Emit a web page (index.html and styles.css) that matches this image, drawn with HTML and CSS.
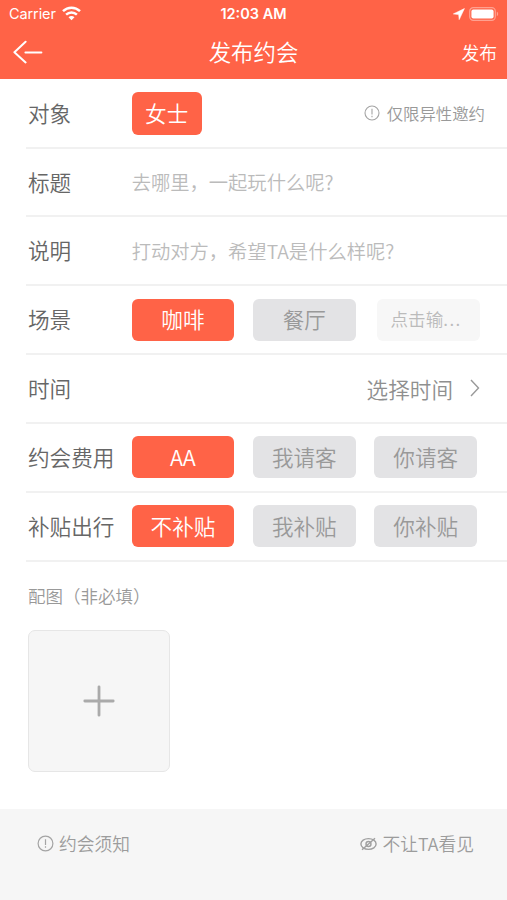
FILE: index.html
```html
<!DOCTYPE html>
<html lang="zh-CN">
<head>
<meta charset="utf-8">
<title>发布约会</title>
<link rel="stylesheet" href="styles.css">
</head>
<body>
<header class="header">
  <div class="status">
    <div class="status-left">
      <span>Carrier</span>
      <svg class="wifi" width="19" height="15" viewBox="0 0 19 15" fill="none" stroke="#fff" stroke-width="2.5">
        <path d="M1 5.2C5.8.6 13.2.6 18 5.2"/>
        <path d="M4.1 8.7c3.1-2.9 7.7-2.9 10.8 0"/>
        <path d="M9.5 14.3 6.5 11.2c1.7-1.5 4.3-1.5 6 0z" fill="#fff" stroke="none"/>
      </svg>
    </div>
    <div class="time">12:03 AM</div>
    <div class="status-right">
      <svg width="12" height="12" viewBox="0 0 12 12" fill="#fff" stroke="#fff" stroke-width=".6" stroke-linejoin="round"><path d="M11.4.6.4 5.9l5.3.5.5 5.2z"/></svg>
      <svg width="30" height="14" viewBox="0 0 30 14"><rect x=".7" y=".7" width="25.6" height="12.6" rx="3.6" fill="none" stroke="#fff" stroke-opacity=".4" stroke-width="1.2"/><rect x="2.4" y="2.4" width="22.2" height="9.2" rx="2" fill="#fff"/><path d="M27.8 4.8c1.8.6 1.8 3.8 0 4.4z" fill="#fff" fill-opacity=".4"/></svg>
    </div>
  </div>
  <nav class="nav">
    <svg class="back" width="30" height="24" viewBox="0 0 30 24" fill="none" stroke="#fff" stroke-width="2" stroke-linecap="round" stroke-linejoin="round"><path d="M12.6 1.8 1.4 12.2l11.2 10.2M12.4 12.6h16"/></svg>
    <h1 class="title">发布约会</h1>
    <span class="publish">发布</span>
  </nav>
</header>
<main class="form">
  <section class="row">
    <span class="label">对象</span>
    <span class="chip chip-small chip-on">女士</span>
    <span class="hint">
      <svg width="16" height="16" viewBox="0 0 16 16" fill="none" stroke="#a4a4a4" stroke-width="1.1"><circle cx="8" cy="8" r="7"/><path d="M8 3.8v5.7M8 10.8v1.4"/></svg>
      仅限异性邀约
    </span>
  </section>
  <section class="row">
    <span class="label">标题</span>
    <span class="placeholder">去哪里，一起玩什么呢?</span>
  </section>
  <section class="row">
    <span class="label">说明</span>
    <span class="placeholder">打动对方，希望TA是什么样呢?</span>
  </section>
  <section class="row">
    <span class="label">场景</span>
    <span class="chip chip-on">咖啡</span>
    <span class="chip">餐厅</span>
    <span class="chip chip-input">点击输<span class="dots">...</span></span>
  </section>
  <section class="row">
    <span class="label">时间</span>
    <span class="picker">选择时间
      <svg width="10" height="18" viewBox="0 0 10 18" fill="none" stroke="#999" stroke-width="1.4"><path d="M1 1l7.5 8L1 17"/></svg>
    </span>
  </section>
  <section class="row">
    <span class="label">约会费用</span>
    <span class="chip chip-on">AA</span>
    <span class="chip">我请客</span>
    <span class="chip">你请客</span>
  </section>
  <section class="row">
    <span class="label">补贴出行</span>
    <span class="chip chip-on">不补贴</span>
    <span class="chip">我补贴</span>
    <span class="chip">你补贴</span>
  </section>
  <section class="photos">
    <div class="photos-label">配图（非必填）</div>
    <div class="upload">
      <svg width="32" height="32" viewBox="0 0 32 32" fill="none" stroke="#aaa" stroke-width="2.8" stroke-linecap="round"><path d="M16 1.8v28.4M1.8 16h28.4"/></svg>
    </div>
  </section>
</main>
<footer class="footer">
  <span class="foot-item">
    <svg width="17" height="17" viewBox="0 0 17 17" fill="none" stroke="#a4a4a4" stroke-width="1.2"><circle cx="8.5" cy="8.5" r="7.4"/><path d="M8.5 4.2v5.7M8.5 11.2v1.5"/></svg>
    约会须知
  </span>
  <span class="foot-item">
    <svg width="17" height="14" viewBox="0 0 17 14" fill="none" stroke="#a0a0a0" stroke-width="1.4"><ellipse cx="8.5" cy="7" rx="7.6" ry="5.4"/><circle cx="8.5" cy="7" r="2.5"/><path d="M2 12.8 15 1.2"/></svg>
    不让TA看见
  </span>
</footer>
</body>
</html>
```
FILE: styles.css
```css
* { box-sizing: border-box; }
body {
  margin: 0;
  height: 900px;
  display: flex;
  flex-direction: column;
  background: #fff;
  color: #666;
  font-family: "Noto Sans CJK SC", sans-serif;
  font-weight: 350;
  font-size: 21.6px;
  white-space: nowrap;
  overflow: hidden;
}
svg { display: block; flex: none; }
.header { height: 79px; background: #ff6347; color: #fff; }
.status {
  height: 27px;
  padding: 0 8px 0 9px;
  display: grid;
  grid-template-columns: 1fr auto 1fr;
  align-items: center;
  font-family: Inter, sans-serif;
  font-size: 14.5px;
  font-weight: 400;
}
.status-left { display: flex; align-items: center; gap: 6px; letter-spacing: -0.1px; }
.time { font-weight: 600; margin-right: 1px; }
.status-right { display: flex; align-items: center; justify-content: flex-end; gap: 4px; }
.nav {
  height: 50px;
  padding: 0 10px 0 13px;
  display: grid;
  grid-template-columns: 1fr auto 1fr;
  align-items: center;
}
.title { margin: 0 3px 2px 0; font-size: 22.4px; font-weight: inherit; }
.publish { font-size: 17.8px; text-align: right; }
.form { padding-top: 0.8px; }
.row {
  height: 68.85px;
  margin-left: 26px;
  padding-left: 2px;
  border-bottom: 2px solid #f1f1f1;
  display: flex;
  align-items: center;
}
.label { width: 103.7px; padding-bottom: 2px; }
.chip {
  width: 102.5px;
  height: 42px;
  margin-right: 18.9px;
  padding-bottom: 2px;
  border-radius: 6px;
  background: #e3e3e5;
  color: #999;
  display: flex;
  align-items: center;
  justify-content: center;
}
.chip-small { width: 70px; height: 43px; }
.chip-on { background: #ff6347; color: #fff; }
.chip-input {
  margin-left: 3px;
  padding-left: 13px;
  justify-content: flex-start;
  background: #f7f7f7;
  color: #bbb;
  font-size: 17.6px;
}
.dots { letter-spacing: 1.4px; }
.hint {
  margin-left: auto;
  padding-right: 22px;
  display: flex;
  align-items: center;
  gap: 7px;
  font-size: 16.4px;
  color: #999;
}
.placeholder { font-size: 19.3px; color: #bbb; }
.picker {
  margin-left: auto;
  padding: 0 27px 1px 0;
  display: flex;
  align-items: center;
  gap: 17px;
  color: #8f8f8f;
}
.photos { padding: 21px 28px 0; }
.photos-label { height: 26px; line-height: 26px; font-size: 17.5px; color: #999; }
.upload {
  width: 142px;
  height: 142px;
  margin-top: 21.5px;
  border: 1.5px solid #e6e6e6;
  border-radius: 7px;
  background: #f6f6f6;
  display: flex;
  align-items: center;
  justify-content: center;
}
.footer {
  height: 91px;
  margin-top: auto;
  padding: 21px 33px 0 37px;
  background: #f6f6f6;
  display: flex;
  justify-content: space-between;
  align-items: flex-start;
}
.foot-item {
  height: 27px;
  display: flex;
  align-items: center;
  gap: 5px;
  font-size: 17.8px;
  line-height: 25px;
  color: #9c9c9c;
}
```
